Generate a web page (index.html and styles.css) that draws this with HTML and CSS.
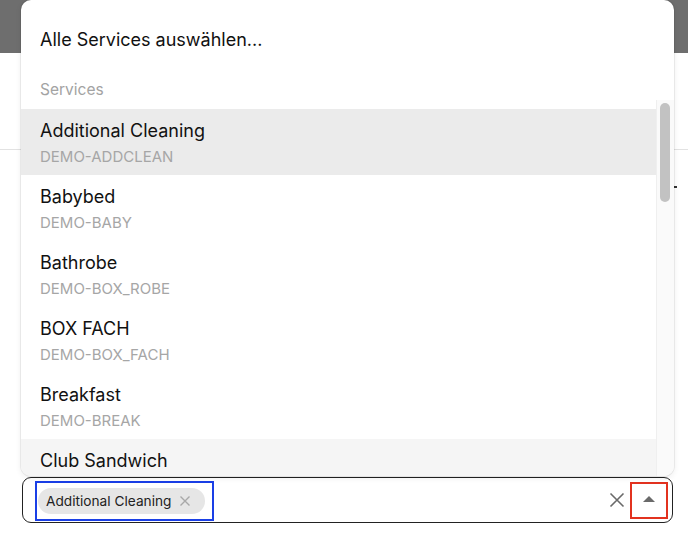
FILE: index.html
```html
<!DOCTYPE html>
<html lang="de">
<head>
<meta charset="utf-8">
<title>Services</title>
<link rel="stylesheet" href="styles.css">
</head>
<body>
<div class="topbar"></div>
<div class="section"></div>
<div class="area"><span class="mark"></span></div>
<div class="field-wrap">
  <div class="menu">
    <div class="opt-all">Alle Services auswählen...</div>
    <div class="group">Services</div>
    <ul class="list">
      <li class="item active"><div class="title">Additional Cleaning</div><div class="code">DEMO-ADDCLEAN</div></li>
      <li class="item"><div class="title">Babybed</div><div class="code">DEMO-BABY</div></li>
      <li class="item"><div class="title">Bathrobe</div><div class="code">DEMO-BOX_ROBE</div></li>
      <li class="item"><div class="title">BOX FACH</div><div class="code">DEMO-BOX_FACH</div></li>
      <li class="item"><div class="title">Breakfast</div><div class="code">DEMO-BREAK</div></li>
      <li class="item hover"><div class="title">Club Sandwich</div></li>
    </ul>
    <div class="scrolltrack"><div class="thumb"></div></div>
  </div>
  <div class="field">
    <div class="chip-box">
      <span class="chip"><span class="chip-label">Additional Cleaning</span><svg class="chip-x" width="12" height="12" viewBox="0 0 12 12"><path d="M1.5 1.5 L10.5 10.5 M10.5 1.5 L1.5 10.5" stroke="#a8a8a8" stroke-width="1.4" fill="none"/></svg></span>
    </div>
    <div class="actions">
      <svg class="clear" width="16" height="16" viewBox="0 0 16 16"><path d="M1.5 1.5 L14.5 14.5 M14.5 1.5 L1.5 14.5" stroke="#6a6a6a" stroke-width="1.6" fill="none"/></svg>
      <div class="toggle"><span class="tri"></span></div>
    </div>
  </div>
</div>
</body>
</html>
```
FILE: styles.css
```css
html, body {
  margin: 0;
  padding: 0;
  background: #fff;
  font-family: Inter, "Noto Sans", sans-serif;
  width: 688px;
  height: 534px;
  overflow: hidden;
}
.topbar {
  height: 53px;
  background: #6e6e6e;
}
.section {
  height: 96px;
  border-bottom: 1px solid #e2e2e2;
}
.area {
  height: 327px;
  position: relative;
}
.mark {
  position: absolute;
  left: 674px;
  top: 36px;
  width: 3px;
  height: 2px;
  background: #333;
}
.field-wrap {
  position: relative;
  margin-left: 22px;
  width: 651px;
}
.menu {
  position: absolute;
  left: -1px;
  right: -1px;
  bottom: calc(100% + 1px);
  height: 476px;
  background: #fff;
  border-radius: 10px;
  box-shadow: 0 0 0 1px rgba(0,0,0,0.06), 0 2px 6px rgba(0,0,0,0.08);
  overflow: hidden;
}
.opt-all {
  padding: 28px 19px 12px;
  line-height: 24px;
  font-size: 18px;
  color: #111;
}
.group {
  padding: 14px 19px 7px;
  line-height: 24px;
  font-size: 15.5px;
  color: #a3a3a3;
}
.list {
  list-style: none;
  margin: 0;
  padding: 0;
  width: 635px;
}
.item {
  height: 66px;
  box-sizing: border-box;
  padding: 10px 19px 0;
}
.item.active { background: #ebebeb; }
.item.hover { background: #f5f5f5; }
.title {
  font-size: 18px;
  line-height: 24px;
  color: #111;
}
.code {
  margin-top: 4px;
  font-size: 15px;
  line-height: 20px;
  color: #a6a6a6;
}
.scrolltrack {
  position: absolute;
  left: 635px;
  top: 100px;
  bottom: 0;
  width: 17px;
  background: #fafafa;
  border-left: 1px solid #efefef;
}
.thumb {
  margin: 3px 0 0 3px;
  width: 10px;
  height: 99px;
  border-radius: 5px;
  background: #c2c2c2;
}
.field {
  height: 46px;
  box-sizing: border-box;
  border: 1px solid #222;
  border-radius: 9px;
  display: flex;
  align-items: center;
  justify-content: space-between;
  padding: 0 4px 0 12px;
  background: #fff;
}
.chip-box {
  box-sizing: border-box;
  width: 179px;
  height: 40px;
  border: 2px solid #1a3fe6;
  display: flex;
  align-items: center;
  padding-left: 1px;
  margin-top: 2px;
}
.chip {
  display: flex;
  align-items: center;
  gap: 8px;
  height: 26px;
  padding: 0 14px 0 8px;
  background: #e6e6e6;
  border-radius: 13px;
  font-size: 13.7px;
  line-height: 26px;
  color: #222;
  white-space: nowrap;
}
.chip-x { display: block; }
.actions {
  display: flex;
  align-items: center;
}
.clear {
  display: block;
  margin-right: 5px;
}
.toggle {
  box-sizing: border-box;
  width: 38px;
  height: 37px;
  border: 2px solid #e2321f;
  display: flex;
  align-items: center;
  justify-content: center;
}
.tri {
  width: 0;
  height: 0;
  border-left: 6px solid transparent;
  border-right: 6px solid transparent;
  border-bottom: 6px solid #6a6a6a;
  margin-top: -2px;
}
```
